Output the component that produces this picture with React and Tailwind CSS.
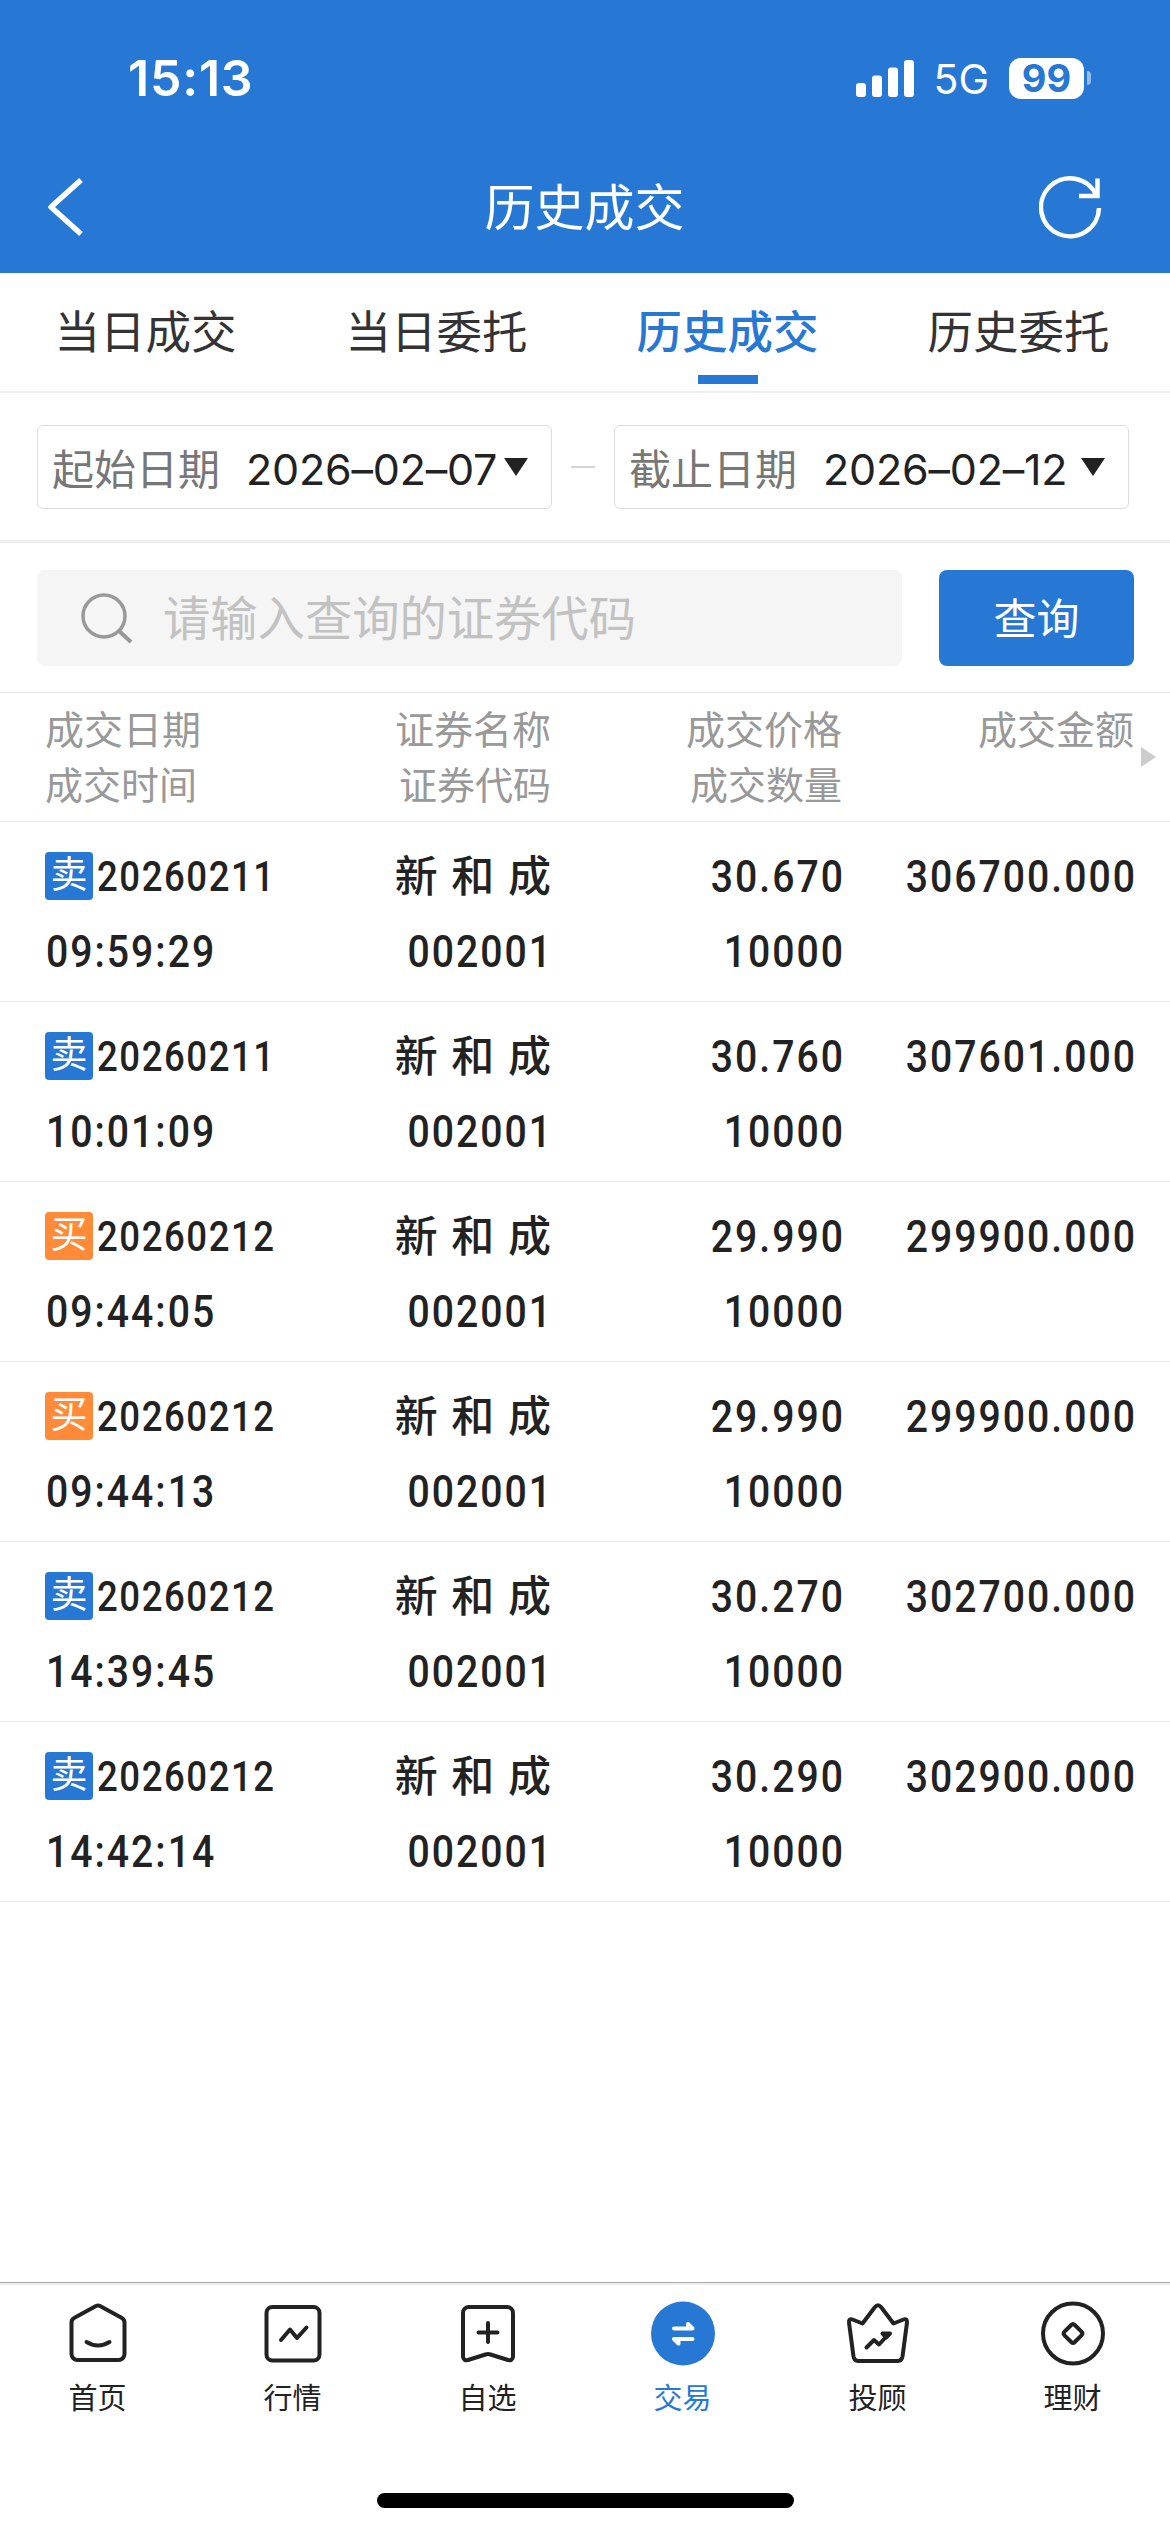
import { clsx } from 'clsx';

const tabs = ['当日成交', '当日委托', '历史成交', '历史委托'];

const trades = [
  { side: '卖', date: '20260211', time: '09:59:29', price: '30.670', amount: '306700.000' },
  { side: '卖', date: '20260211', time: '10:01:09', price: '30.760', amount: '307601.000' },
  { side: '买', date: '20260212', time: '09:44:05', price: '29.990', amount: '299900.000' },
  { side: '买', date: '20260212', time: '09:44:13', price: '29.990', amount: '299900.000' },
  { side: '卖', date: '20260212', time: '14:39:45', price: '30.270', amount: '302700.000' },
  { side: '卖', date: '20260212', time: '14:42:14', price: '30.290', amount: '302900.000' },
];

const HomeIcon = () => (
  <>
    <path d="M5.500 21.500c0-2.200 1-3.800 3-4.800L30 5a4.500 4.500 0 0 1 4 0l21.500 11.700c2 1 3 2.600 3 4.800V53a6 6 0 0 1-6 6h-41a6 6 0 0 1-6-6z" />
    <path d="M20.500 41c7 4.500 16 4.500 23 0" />
  </>
);

const MarketIcon = () => (
  <>
    <rect x="5.500" y="6" width="53" height="53.500" rx="6" />
    <path d="M20 39l9-10.500 7 8.500 9.500-10.500" />
  </>
);

const StarredIcon = () => (
  <>
    <path d="M7 12a6 6 0 0 1 6-6h38a6 6 0 0 1 6 6v43.500c0 3-2.500 4.500-5 3.500l-17.500-5.500a8 8 0 0 0-5 0L12 59c-2.500 1-5-.5-5-3.500z" />
    <path d="M32 22v19M22.500 31.500h19" />
  </>
);

const TradeIcon = () => (
  <>
    <circle cx="32" cy="32.500" r="32" fill="#2678d4" stroke="none" />
    <path d="M23 27.500h18.500l-4.500-4.500v4.500M41.500 38H23l4.500 4.500V38" fill="#fff" stroke="#fff" />
  </>
);

const AdvisorIcon = () => (
  <>
    <path d="M3 21.500c-.5-2.500 1-4 3.500-3L16.500 22.500 29 6c2-2.400 4-2.400 6 0l12.500 16.500 10-4c2.500-1 4 .5 3.500 3l-4.500 34c-.5 3-2 4.500-4.500 4.500H12c-2.500 0-4-1.500-4.500-4.500z" />
    <path d="M20.500 46.500l7.500-7.500 5 4.500 8-8.500" />
    <path d="M36.500 32.500h7.500l-4 4z" fill="currentColor" />
  </>
);

const WealthIcon = () => (
  <>
    <circle cx="32" cy="32.500" r="30" />
    <path d="M30.200 24a2.600 2.600 0 0 1 3.600 0l6.700 6.700a2.600 2.600 0 0 1 0 3.600L33.800 41a2.600 2.600 0 0 1-3.600 0l-6.700-6.700a2.600 2.600 0 0 1 0-3.600z" />
  </>
);

const navItems = [
  { label: '首页', icon: HomeIcon },
  { label: '行情', icon: MarketIcon },
  { label: '自选', icon: StarredIcon },
  { label: '交易', icon: TradeIcon, active: true },
  { label: '投顾', icon: AdvisorIcon },
  { label: '理财', icon: WealthIcon },
];

const StatusBar = () => (
  <div className="flex h-[156px] items-center justify-between pl-[128px] pr-[79px] font-['Inter']">
    <span className="text-[50px] font-semibold tracking-[0.800px]">15:13</span>
    <div className="flex items-center">
      <svg width="58" height="38" viewBox="0 0 58 38" fill="currentColor">
        <rect x="0" y="24" width="10" height="14" rx="3" />
        <rect x="16" y="16.500" width="10" height="21.500" rx="3" />
        <rect x="32" y="8.500" width="10" height="29.500" rx="3" />
        <rect x="48" y="1" width="10" height="37" rx="3" />
      </svg>
      <span className="ml-[19px] mt-[3px] text-[41px]">5G</span>
      <span className="ml-[20px] flex h-[41px] w-[75px] items-center justify-center rounded-[12px] bg-white text-[38px] font-bold text-[#2678d4]">
        99
      </span>
      <span className="ml-[3px] h-[14px] w-1 rounded-r-full bg-white/50" />
    </div>
  </div>
);

const TitleBar = () => (
  <div className="flex h-[117px] items-start justify-between pl-[46px] pr-[67px] pt-[20px]">
    <svg width="38" height="62" viewBox="0 0 38 62" fill="none" stroke="currentColor" strokeWidth="5.500" strokeLinejoin="round">
      <path d="M35 4L5 31l30 27" />
    </svg>
    <h1 className="-mt-[3px] ml-[46px] text-[50px] leading-[62px]">历史成交</h1>
    <svg width="64" height="64" viewBox="0 0 64 64" fill="none" stroke="currentColor" strokeWidth="4.500">
      <path d="M60 32A29 29 0 1 1 57.500 19.500" />
      <path d="M58.500 2.500V20H40" />
    </svg>
  </div>
);

const DateField = ({ label, value }) => (
  <div className="flex h-[84px] w-[515px] items-center rounded-[6px] border border-[#dcdcdc] pl-[14px]">
    <span className="text-[42px] text-[#777]">{label}</span>
    <span className="ml-[26px] mt-[5px] w-[251px] whitespace-nowrap font-['Inter'] text-[43px] tracking-[-0.200px] text-[#222]">{value}</span>
    <svg className="ml-[7px]" width="24" height="18" viewBox="0 0 24 18" fill="#222">
      <path d="M0 0h24L12 18z" />
    </svg>
  </div>
);

// Roboto squeezed to the proportions of a DIN figure
const Figures = ({ children, className }) => (
  <span className={clsx('inline-block scale-x-[0.87] whitespace-nowrap tracking-[2.300px]', className)}>{children}</span>
);

const TradeRow = ({ trade }) => (
  <div className="h-[180px] border-b border-[#ececec] pl-[45px] pr-[37px] pt-[25px] font-['Roboto','Noto_Sans_CJK_SC',sans-serif] text-[45px] font-medium text-[#222]">
    <div className="grid grid-cols-[215px_291px_290px_292px] text-right leading-[60px]">
      <div className="flex items-center">
        <span
          className={clsx(
            '-mt-[3px] flex h-12 w-12 shrink-0 items-center justify-center rounded-[4px] text-[37px] font-normal text-white',
            trade.side === '卖' ? 'bg-[#2678d4]' : 'bg-[#ff8b38]',
          )}
        >
          {trade.side}
        </span>
        <span className="ml-1 inline-block origin-left scale-x-[0.87] whitespace-nowrap text-[42px] tracking-[1.800px]">
          {trade.date}
        </span>
      </div>
      <span className="text-[43px] [word-spacing:3px]">新 和 成</span>
      <Figures className="-mr-[4px] origin-right">{trade.price}</Figures>
      <Figures className="-mr-[4px] origin-right">{trade.amount}</Figures>
    </div>
    <div className="mt-[15px] grid grid-cols-[215px_291px_290px_292px] text-right leading-[60px]">
      <Figures className="ml-px origin-left text-left">{trade.time}</Figures>
      <Figures className="-mr-[2px] origin-right">002001</Figures>
      <Figures className="-mr-[4px] origin-right">10000</Figures>
    </div>
  </div>
);

const App = () => (
  <div className="flex h-[2532px] w-[1170px] flex-col bg-white font-['Noto_Sans_CJK_SC',sans-serif]">
    <header className="h-[273px] bg-[#2678d4] text-white">
      <StatusBar />
      <TitleBar />
    </header>

    <nav className="flex h-[120px] border-b-2 border-[#efefef] pr-[6px]">
      {tabs.map((tab) => (
        <button
          key={tab}
          type="button"
          className={clsx(
            'flex flex-1 flex-col items-center pt-[24px] text-[45.500px] leading-[64px]',
            tab === '历史成交' ? 'font-medium text-[#2678d4]' : 'text-[#333]',
          )}
        >
          {tab}
          {tab === '历史成交' && <span className="mt-[14px] h-[9px] w-[60px] bg-[#2678d4]" />}
        </button>
      ))}
    </nav>

    <div className="flex h-[150px] items-center justify-between border-b-3 border-[#eee] pl-[37px] pr-[41px]">
      <DateField label="起始日期" value="2026–02–07" />
      <span className="h-[2px] w-6 bg-[#d4d4d4]" />
      <DateField label="截止日期" value="2026–02–12" />
    </div>

    <div className="flex h-[150px] items-center gap-[37px] border-b border-[#e8e8e8] pl-[37px] pr-9">
      <div className="flex h-24 flex-1 items-center rounded-[8px] bg-[#f5f5f5] pl-[44px]">
        <svg width="52" height="52" viewBox="0 0 52 52" fill="none" stroke="#999" strokeWidth="3.500">
          <circle cx="23" cy="24" r="21" />
          <path d="M38 39l12 11" strokeWidth="4" />
        </svg>
        <span className="-mt-[2px] ml-[30px] text-[47.300px] text-[#c2c2c2]">请输入查询的证券代码</span>
      </div>
      <button type="button" className="h-24 w-[195px] rounded-[8px] bg-[#2678d4] pb-[2px] text-[43px] text-white">
        查询
      </button>
    </div>

    <div className="flex h-[129px] items-center border-b border-[#ececec] pl-[45px] text-[#999]">
      <div className="-mt-[4px] grid grid-cols-[215px_291px_291px_292px] text-right text-[39px] leading-[55px]">
        <span className="text-left">成交日期</span>
        <span>证券名称</span>
        <span>成交价格</span>
        <span>成交金额</span>
        <span className="text-left text-[38px]">成交时间</span>
        <span className="text-[38px]">证券代码</span>
        <span className="text-[38px]">成交数量</span>
      </div>
      <svg className="ml-[7px]" width="15" height="20" viewBox="0 0 15 20" fill="#ccc">
        <path d="M0 0l15 10L0 20z" />
      </svg>
    </div>

    <main className="flex-1">
      {trades.map((trade) => (
        <TradeRow key={trade.time} trade={trade} />
      ))}
    </main>

    <footer className="flex h-[250px] flex-col items-center border-t border-[#aaa]">
      <div className="flex w-full justify-center border-t-2 border-[#eee] pt-[16px]">
        {navItems.map(({ label, icon: Icon, active }) => (
          <div key={label} className={clsx('flex w-[195px] flex-col items-center', active ? 'text-[#2678d4]' : 'text-[#222]')}>
            <svg width="66" height="66" viewBox="-1 0 66 66" fill="none" stroke="currentColor" strokeWidth="4" strokeLinecap="round" strokeLinejoin="round">
              <Icon />
            </svg>
            <span className="mt-[8px] text-[29px] leading-[42px]">{label}</span>
          </div>
        ))}
      </div>
      <div className="mt-auto mb-6 h-[15px] w-[417px] rounded-full bg-black" />
    </footer>
  </div>
);

export default App;
